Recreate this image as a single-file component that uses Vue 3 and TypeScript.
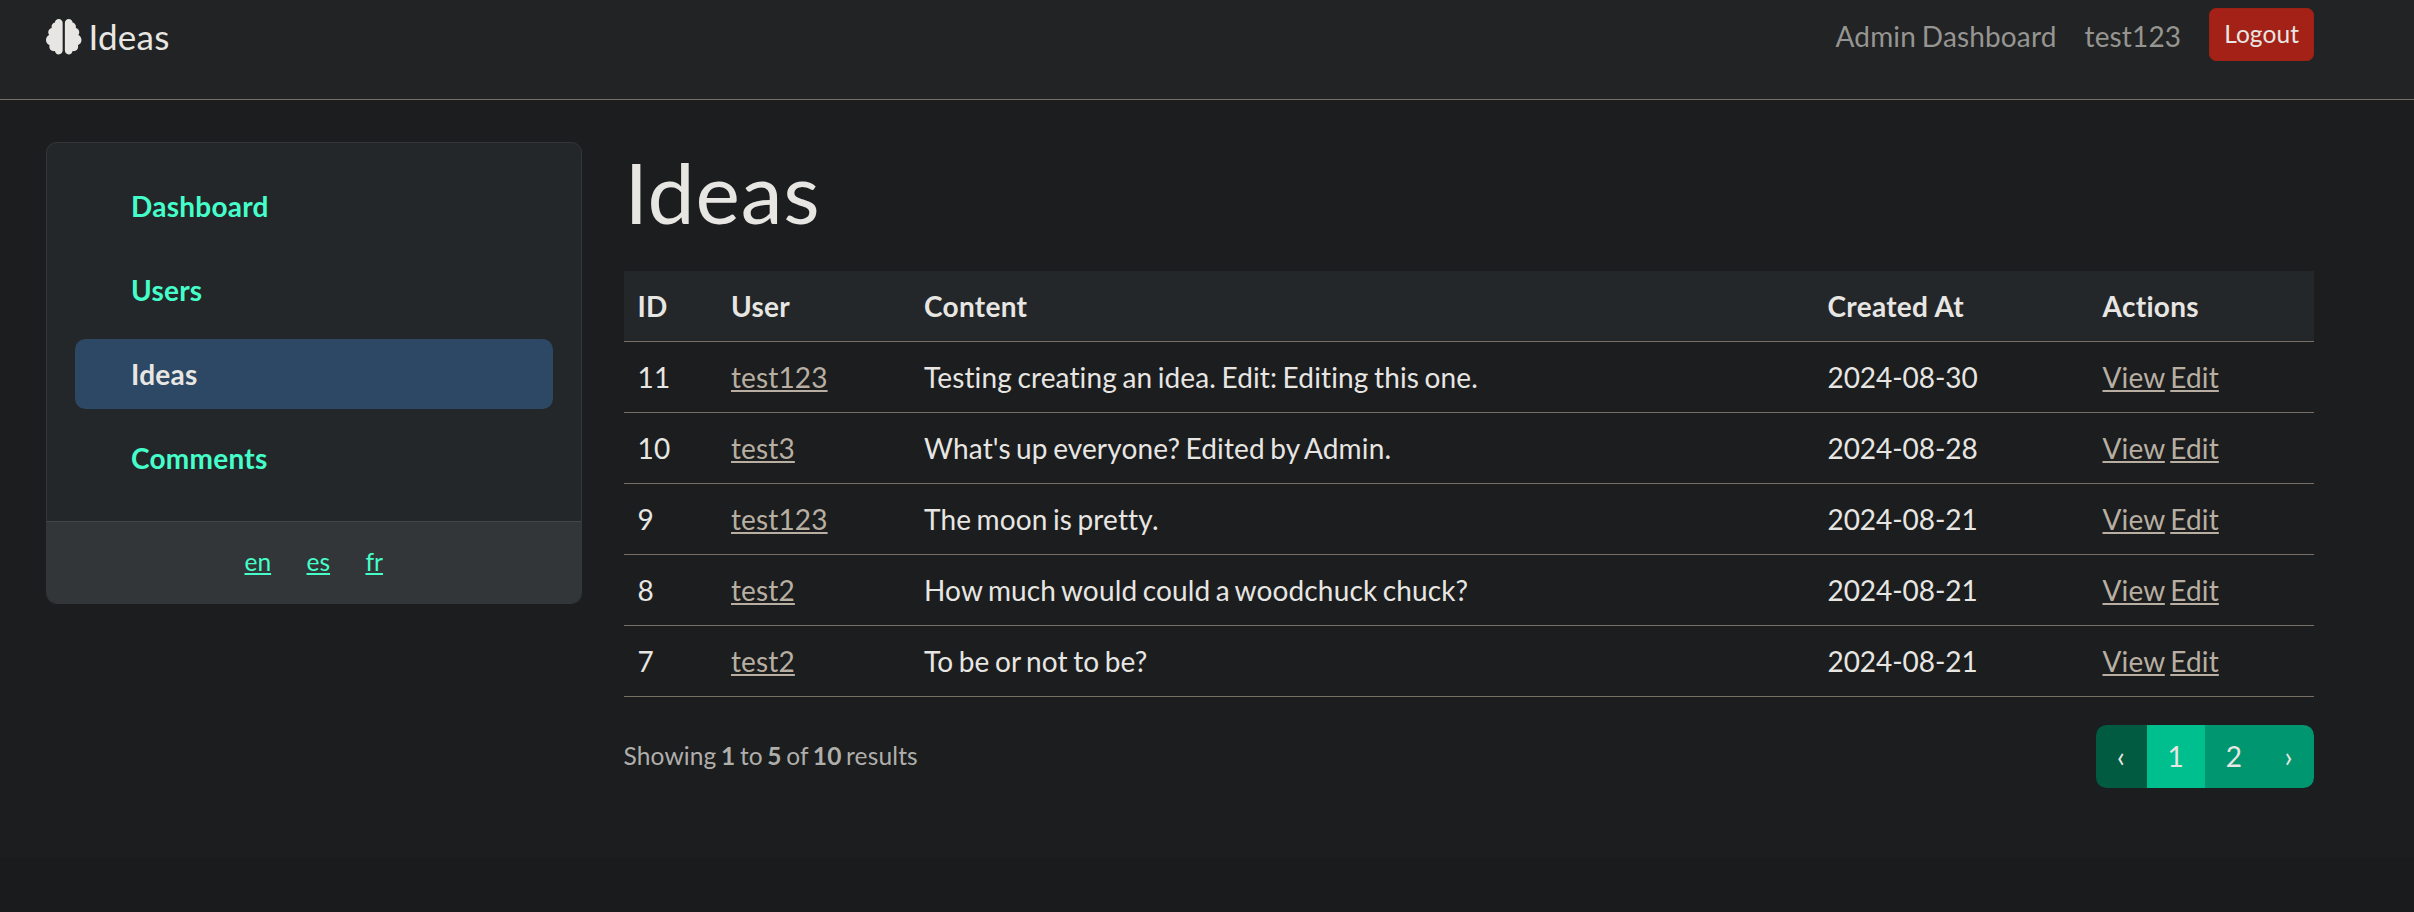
<script setup lang="ts">
interface Idea {
  id: number
  user: string
  content: string
  createdAt: string
}

const menu: string[] = ['Dashboard', 'Users', 'Ideas', 'Comments']
const active = 'Ideas'
const languages: string[] = ['en', 'es', 'fr']

const ideas: Idea[] = [
  { id: 11, user: 'test123', content: 'Testing creating an idea. Edit: Editing this one.', createdAt: '2024-08-30' },
  { id: 10, user: 'test3', content: "What's up everyone? Edited by Admin.", createdAt: '2024-08-28' },
  { id: 9, user: 'test123', content: 'The moon is pretty.', createdAt: '2024-08-21' },
  { id: 8, user: 'test2', content: 'How much would could a woodchuck chuck?', createdAt: '2024-08-21' },
  { id: 7, user: 'test2', content: 'To be or not to be?', createdAt: '2024-08-21' },
]
</script>

<template>
  <div class="page">
    <nav class="navbar">
      <div class="container nav-inner">
        <a class="brand">
          <svg class="brain" viewBox="0 0 512 512" aria-hidden="true">
            <path
              fill="currentColor"
              d="M184 0c30.9 0 56 25.1 56 56V456c0 30.9-25.1 56-56 56c-28.9 0-52.7-21.9-55.7-50.1c-5.2 1.4-10.7 2.1-16.3 2.1c-35.3 0-64-28.7-64-64c0-7.4 1.3-14.6 3.6-21.2C21.4 367.4 0 338.2 0 304c0-31.9 18.7-59.5 45.8-72.3C37.1 220.8 32 207 32 192c0-30.7 21.6-56.3 50.4-62.6C80.8 123.9 80 118 80 112c0-29.9 20.6-55.1 48.3-62.1C131.3 21.9 155.1 0 184 0zM328 0c28.9 0 52.6 21.9 55.7 49.9c27.8 7 48.3 32.1 48.3 62.1c0 6-.8 11.9-2.4 17.4c28.8 6.2 50.4 31.9 50.4 62.6c0 15-5.1 28.8-13.8 39.7C493.3 244.5 512 272.1 512 304c0 34.2-21.4 63.4-51.6 74.8c2.3 6.6 3.6 13.8 3.6 21.2c0 35.3-28.7 64-64 64c-5.6 0-11.1-.7-16.3-2.1c-3 28.2-26.8 50.1-55.7 50.1c-30.9 0-56-25.1-56-56V56c0-30.9 25.1-56 56-56z"
            />
          </svg>
          <span>Ideas</span>
        </a>
        <div class="nav-right">
          <a class="nav-link">Admin Dashboard</a>
          <a class="nav-link">test123</a>
          <button class="logout" type="button">Logout</button>
        </div>
      </div>
    </nav>

    <div class="container layout">
      <aside class="card">
        <ul class="menu">
          <li v-for="item in menu" :key="item" :class="['menu-item', { active: item === active }]">{{ item }}</li>
        </ul>
        <div class="card-footer">
          <a v-for="lang in languages" :key="lang" class="lang">{{ lang }}</a>
        </div>
      </aside>

      <main class="main">
        <h1>Ideas</h1>
        <table class="table">
          <colgroup>
            <col class="c-id" />
            <col class="c-user" />
            <col />
            <col class="c-date" />
            <col class="c-actions" />
          </colgroup>
          <thead>
            <tr>
              <th>ID</th>
              <th>User</th>
              <th>Content</th>
              <th>Created At</th>
              <th>Actions</th>
            </tr>
          </thead>
          <tbody>
            <tr v-for="idea in ideas" :key="idea.id">
              <td>{{ idea.id }}</td>
              <td><a class="link">{{ idea.user }}</a></td>
              <td>{{ idea.content }}</td>
              <td class="date">{{ idea.createdAt }}</td>
              <td><a class="link">View</a>&#32;<a class="link">Edit</a></td>
            </tr>
          </tbody>
        </table>
        <div class="results">
          <p class="summary">Showing <b>1</b> to <b>5</b> of <b>10</b> results</p>
          <div class="pagination">
            <span class="page-link arrow disabled">‹</span>
            <span class="page-link current">1</span>
            <span class="page-link">2</span>
            <span class="page-link arrow">›</span>
          </div>
        </div>
      </main>
    </div>
  </div>
</template>

<style>
body {
  margin: 0;
  background: #1a1b1c;
}
</style>

<style scoped>
.page {
  box-sizing: border-box;
  min-height: 858px;
  background: #1b1d1e;
  color: #e8e6e3;
  font-family: Lato, 'Liberation Sans', sans-serif;
  font-size: 28px;
  font-variant-ligatures: none;
  letter-spacing: 0.005em;
  line-height: 42px;
  word-spacing: -0.067em;
}

.container {
  box-sizing: border-box;
  width: 2310px;
  margin-left: 25px;
  padding: 0 21px;
}

.navbar {
  box-sizing: border-box;
  height: 100px;
  background: #212324;
  border-bottom: 1px solid #787066;
}

.nav-inner {
  display: flex;
  justify-content: space-between;
  align-items: flex-start;
}

.brand {
  display: flex;
  gap: 7px;
  padding-top: 10px;
  font-size: 35px;
  letter-spacing: 0.007em;
  line-height: 52.5px;
}

.brain {
  width: 35.5px;
  height: 35.5px;
  margin-top: 9px;
}

.nav-right {
  display: flex;
  align-items: flex-start;
  gap: 28px;
  padding-top: 8px;
}

.nav-link {
  padding-top: 7px;
  color: #969591;
  word-spacing: -0.05em;
}

.logout {
  padding: 7px 14px;
  border: 1px solid #9c2115;
  border-radius: 7px;
  background: #a32116;
  color: #e8e6e3;
  font-family: inherit;
  font-size: 24.5px;
  letter-spacing: 0.003em;
  line-height: 36.75px;
}

.layout {
  display: flex;
  align-items: flex-start;
  gap: 42px;
  padding-top: 42px;
}

.card {
  box-sizing: border-box;
  width: 535.5px;
  flex: none;
  overflow: hidden;
  border: 1px solid #343638;
  border-radius: 10.5px;
  background: #232729;
}

.menu {
  display: flex;
  flex-direction: column;
  gap: 14px;
  margin: 0;
  padding: 28px;
  list-style: none;
}

.menu-item {
  padding: 14px 56px;
  border-radius: 10.5px;
  color: #45ffca;
  font-weight: 700;
  letter-spacing: 0.009em;
}

.menu-item.active {
  background: #2d4865;
  color: #e8e6e3;
}

.card-footer {
  display: flex;
  justify-content: center;
  gap: 5.4px;
  padding: 14px 28px;
  border-top: 1px solid #43474a;
  background: #323638;
}

.lang {
  padding: 8px 15px;
  color: #45ffca;
  font-size: 24.5px;
  letter-spacing: 0;
  line-height: 36.75px;
  text-decoration: underline;
}

.main {
  flex: 1;
  min-width: 0;
}

h1 {
  margin: 0 0 28px;
  padding-left: 1px;
  font-size: 84px;
  font-weight: 400;
  letter-spacing: 0.01em;
  line-height: 100.8px;
}

.table {
  width: 100%;
  table-layout: fixed;
  border-collapse: separate;
  border-spacing: 0;
}

.c-id {
  width: 93.5px;
}

.c-user {
  width: 193px;
}

.c-date {
  width: 275px;
}

.c-actions {
  width: 225.5px;
}

th,
td {
  padding: 14px;
  border-bottom: 1px solid #787066;
  text-align: left;
}

th {
  background: #232729;
  font-weight: 700;
  letter-spacing: 0.011em;
  word-spacing: 0;
}

.date {
  letter-spacing: -0.002em;
}

.link {
  color: #b8afa2;
  text-decoration: underline;
}

.results {
  display: flex;
  justify-content: space-between;
  align-items: center;
  margin-top: 28px;
}

.summary {
  margin: 0;
  color: #b0aeab;
  font-size: 24.5px;
  line-height: 36.75px;
}

.pagination {
  display: flex;
  overflow: hidden;
  border-radius: 10.5px;
}

.page-link {
  padding: 10.5px 21px;
  background: #009670;
  letter-spacing: 0;
}

.page-link.arrow {
  box-sizing: border-box;
  width: 51px;
  text-align: center;
}

.page-link.disabled {
  background: #005b40;
}

.page-link.current {
  background: #00bf8f;
}
</style>
